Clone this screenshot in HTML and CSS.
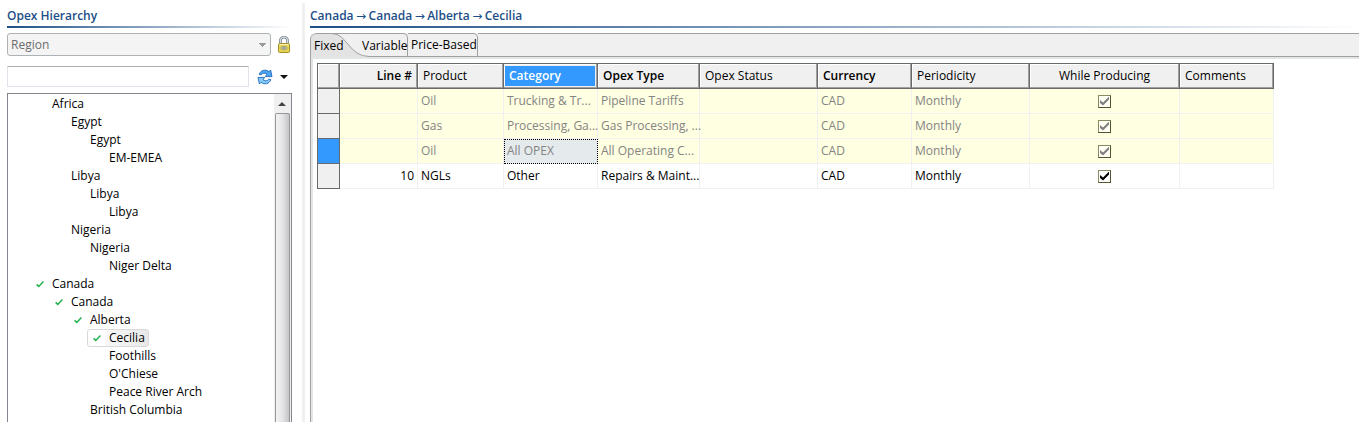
FILE: index.html
```html
<!DOCTYPE html>
<html lang="en">
<head>
<meta charset="utf-8">
<title>Opex Hierarchy</title>
<link rel="stylesheet" href="styles.css">
</head>
<body>
<svg width="0" height="0" class="defs" aria-hidden="true">
  <defs>
    <symbol id="tick" viewBox="0 0 8 8"><path d="M.6 4.4 2.8 6.4 7.4 1.6" fill="none" stroke="#22b14c" stroke-width="1.5"/></symbol>
  </defs>
</svg>
<div class="app">
  <aside class="side">
    <h2 class="title">Opex Hierarchy</h2>
    <div class="picker">
      <select class="level" aria-label="Hierarchy level" disabled><option>Region</option></select>
      <svg class="lock" viewBox="0 0 14 17" role="img" aria-label="Locked">
        <path d="M3.4 8V4.8a3.6 3.6 0 0 1 7.2 0V8" fill="none" stroke="#7d8a93" stroke-width="2.8"/>
        <path d="M3.4 8V4.8a3.6 3.6 0 0 1 7.2 0V8" fill="none" stroke="#d3dbe0" stroke-width="1.2"/>
        <rect x="1.5" y="7.5" width="11" height="9" rx="1" fill="#e6d456" stroke="#a08f2c"/>
        <path d="M2.5 8.5h9" stroke="#faf4b4"/>
        <ellipse cx="7" cy="12" rx="3.2" ry="1.8" fill="#c6cccf" stroke="#a49b4c" stroke-width=".8"/>
        <path d="M5.4 12h3.2" stroke="#6b757c"/>
      </svg>
    </div>
    <div class="search">
      <input class="filter" type="text" aria-label="Filter">
      <button class="refresh" aria-label="Refresh">
        <svg width="16" height="16" viewBox="0 0 16 16">
          <path d="M2.2 5.4C3.6 1 8.6 0 12 2.6L13.6 1 15 7.6H8.4L10 5.2C7.8 3.6 5.4 4 4.2 5.8Z" fill="#4fa6ef" stroke="#1f66bd" stroke-width=".9"/>
          <path d="M13.8 10.6C12.4 15 7.4 16 4 13.4L2.4 15 1 8.4H7.6L6 10.8C8.2 12.4 10.6 12 11.8 10.2Z" fill="#86cbf8" stroke="#1f66bd" stroke-width=".9"/>
        </svg>
      </button>
      <button class="more" aria-label="More"><svg width="8" height="4" viewBox="0 0 8 4"><path d="M0 0h8L4 4z" fill="#111"/></svg></button>
    </div>
    <div class="treebox">
      <ul class="tree">
        <li class="l1"><span class="node">Africa</span></li>
        <li class="l2"><span class="node">Egypt</span></li>
        <li class="l3"><span class="node">Egypt</span></li>
        <li class="l4"><span class="node">EM-EMEA</span></li>
        <li class="l2"><span class="node">Libya</span></li>
        <li class="l3"><span class="node">Libya</span></li>
        <li class="l4"><span class="node">Libya</span></li>
        <li class="l2"><span class="node">Nigeria</span></li>
        <li class="l3"><span class="node">Nigeria</span></li>
        <li class="l4"><span class="node">Niger Delta</span></li>
        <li class="l1"><span class="node"><svg class="tick"><use href="#tick"/></svg>Canada</span></li>
        <li class="l2"><span class="node"><svg class="tick"><use href="#tick"/></svg>Canada</span></li>
        <li class="l3"><span class="node"><svg class="tick"><use href="#tick"/></svg>Alberta</span></li>
        <li class="l4"><span class="node selected"><svg class="tick"><use href="#tick"/></svg>Cecilia</span></li>
        <li class="l4"><span class="node">Foothills</span></li>
        <li class="l4"><span class="node">O'Chiese</span></li>
        <li class="l4"><span class="node">Peace River Arch</span></li>
        <li class="l3"><span class="node">British Columbia</span></li>
      </ul>
      <div class="scroll">
        <svg class="up" width="8" height="4" viewBox="0 0 8 4"><path d="M0 4h8L4 0z" fill="#444"/></svg>
        <div class="thumb"></div>
      </div>
    </div>
  </aside>
  <div class="split"></div>
  <main class="main">
    <h2 class="title crumbs"><span>Canada</span><span class="arrow">→</span><span>Canada</span><span class="arrow">→</span><span>Alberta</span><span class="arrow">→</span><span>Cecilia</span></h2>
    <div class="folder">
      <div class="tabs" role="tablist">
        <button class="tab tab-active" role="tab" aria-selected="true">Fixed</button>
        <svg class="curve" width="37" height="24" viewBox="0 0 37 24"><path d="M0 0C15 0 17 23.5 37 23.5V24H0z" fill="#e3e3e3"/><path d="M0 .5C15 .5 17 23.5 37 23.5" fill="none" stroke="#a0a0a0"/><path d="M0 .5H37" stroke="#a0a0a0"/></svg>
        <button class="tab tab-first" role="tab">Variable</button>
        <button class="tab tab-next" role="tab">Price-Based</button>
        <div class="tabfill"></div>
      </div>
      <div class="page">
        <table class="grid">
          <colgroup><col class="c-mark"><col class="c-line"><col class="c-prod"><col class="c-cat"><col class="c-type"><col class="c-stat"><col class="c-cur"><col class="c-per"><col class="c-while"><col class="c-com"></colgroup>
          <thead>
            <tr><th></th><th class="req num">Line #</th><th>Product</th><th class="req current"><span>Category</span></th><th class="req">Opex Type</th><th>Opex Status</th><th class="req">Currency</th><th>Periodicity</th><th class="mid">While Producing</th><th>Comments</th></tr>
          </thead>
          <tbody>
            <tr class="locked"><td class="mark"></td><td></td><td>Oil</td><td>Trucking &amp; Tr...</td><td>Pipeline Tariffs</td><td></td><td>CAD</td><td>Monthly</td><td class="mid"><input type="checkbox" aria-label="While producing" checked disabled></td><td></td></tr>
            <tr class="locked"><td class="mark"></td><td></td><td>Gas</td><td>Processing, Ga...</td><td>Gas Processing, ...</td><td></td><td>CAD</td><td>Monthly</td><td class="mid"><input type="checkbox" aria-label="While producing" checked disabled></td><td></td></tr>
            <tr class="locked"><td class="mark on"></td><td></td><td>Oil</td><td class="focus">All OPEX</td><td>All Operating C...</td><td></td><td>CAD</td><td>Monthly</td><td class="mid"><input type="checkbox" aria-label="While producing" checked disabled></td><td></td></tr>
            <tr><td class="mark"></td><td class="num">10</td><td>NGLs</td><td>Other</td><td>Repairs &amp; Maint...</td><td></td><td>CAD</td><td>Monthly</td><td class="mid"><input type="checkbox" aria-label="While producing" checked></td><td></td></tr>
          </tbody>
        </table>
      </div>
    </div>
  </main>
</div>
</body>
</html>
```
FILE: styles.css
```css
* { box-sizing: border-box; }
body { margin: 0; background: #fff; color: #000; font: 12px/18px "Open Sans", "Noto Sans", sans-serif; }
button, input, select { font: inherit; color: inherit; margin: 0; }
.defs { display: none; }
.app { display: flex; height: 100vh; overflow: hidden; }

.side { flex: none; width: 292px; padding: 7px 0 0 7px; display: flex; flex-direction: column; }
.split { flex: none; width: 3px; margin: 3px 5px 0 10px; background: #f0f0f0; }
.main { flex: 1; min-width: 0; padding-top: 7px; display: flex; flex-direction: column; }

.title { margin: 0; height: 21px; font-size: 12px; line-height: 18px; font-weight: 600; color: #1c4e87; white-space: nowrap; border-bottom: 2px solid; border-image: linear-gradient(90deg, #1c4e87, #fff) 1; }
.crumbs { display: flex; gap: 2px; }
.arrow { width: 11px; font-family: "DejaVu Sans", sans-serif; font-weight: 400; text-align: center; }

.picker { display: flex; align-items: center; gap: 6px; margin-top: 5px; }
.level { appearance: none; width: 264px; height: 23px; padding: 0 3px; border: 1px solid #adb2b5; border-radius: 3px; color: #6d6d6d; opacity: 1;
  background: conic-gradient(from -45deg at 50% 100%, #999 90deg, transparent 0) 250px 9px / 8px 4px no-repeat, #f4f4f4; }
.lock { width: 14px; height: 17px; }
.search { display: flex; align-items: center; margin-top: 10px; }
.filter { width: 242px; height: 21px; padding: 0 4px; border: 1px solid #e2e3ea; border-top-color: #abadb3; border-radius: 1px; background: #fff; }
.refresh, .more { display: flex; padding: 0; border: 0; background: none; }
.refresh { margin-left: 8px; }
.more { margin-left: 7px; }

.treebox { flex: 1; min-height: 0; display: flex; width: 285px; margin-top: 6px; border: 1px solid #828790; border-bottom: 0; overflow: hidden; }
.tree { flex: 1; margin: 0; padding: 1px 0 0; list-style: none; }
.tree li { height: 18px; white-space: nowrap; }
.l1 { padding-left: 22px; }
.l2 { padding-left: 41px; }
.l3 { padding-left: 60px; }
.l4 { padding-left: 79px; }
.node { display: inline-flex; align-items: center; height: 18px; padding-left: 22px; }
.node:has(.tick) { padding-left: 6px; gap: 8px; }
.tree .node.selected { padding: 0 3px 0 5px; border: 1px solid #d9d9d9; border-radius: 3px; background: linear-gradient(90deg, #fff 17px, #f8f8f8 17px, #e8e8e8); }
.tick { width: 8px; height: 8px; }
.scroll { width: 17px; padding: 1px 1px 0 0; display: flex; flex-direction: column; align-items: center; background: #f0f0f0; }
.up { flex: none; margin: 7px 0; }
.thumb { flex: 1; width: 15px; border: 1px solid #979797; border-bottom: 0; border-radius: 2px 2px 0 0; background: linear-gradient(90deg, #f4f4f4, #e4e4e6 50%, #c4c4c8); }

.folder { flex: 1; margin-top: 5px; display: flex; flex-direction: column; border-left: 1px solid #a0a0a0; border-top-left-radius: 6px; }
.tabs { display: flex; height: 24px; background: #f0f0f0; border-radius: 5px 0 0 0; }
.tab { padding: 0; border: 0; border-top: 1px solid #a0a0a0; background: none; white-space: nowrap; text-align: left; }
.tab-active { width: 21px; padding-left: 3px; background: #e3e3e3; border-top-left-radius: 6px; position: relative; z-index: 1; }
.curve { flex: none; margin-right: -8px; }
.tab-first, .tab-next { border-right: 1px solid #a0a0a0; border-bottom: 1px solid #a0a0a0; border-top-right-radius: 5px; }
.tab-first { width: 47px; padding-left: 1px; border-bottom: 0; background: linear-gradient(#a0a0a0, #a0a0a0) 8px 100% / 100% 1px no-repeat; }
.tab-next { width: 70px; padding-left: 3px; }
.tabfill { flex: 1; border-top: 1px solid #a0a0a0; border-bottom: 1px solid #a0a0a0; }
.page { flex: 1; padding: 4px; border: 2px solid #e3e6e6; border-width: 2px 0 0 2px; }

.grid { table-layout: fixed; width: 957px; border-collapse: separate; border-spacing: 0; border-left: 1px solid #696969; border-top: 1px solid #696969; }
.c-mark { width: 22px; } .c-line { width: 78px; } .c-prod { width: 86px; } .c-cat, .c-cur, .c-com { width: 94px; }
.c-type { width: 102px; } .c-stat, .c-per { width: 118px; } .c-while { width: 150px; }
.grid th, .grid td { height: 25px; padding: 0 0 0 3px; text-align: left; vertical-align: middle; white-space: nowrap; border: 0 solid #f0f0f0; border-width: 0 1px 1px 0; }
.grid th { padding: 0 5px; font-weight: 400; background: #f0f0f0; border-color: #696969; box-shadow: inset -1px -1px #a0a0a0, inset 1px 1px #fff; }
.grid .req { font-weight: 600; }
.grid .num { text-align: right; padding-right: 3px; }
.grid th.num { padding-right: 5px; }
.grid .mid { text-align: center; padding: 0; }
.grid th.current { padding: 2px 2px 2px 1px; }
.current span { display: block; height: 20px; line-height: 20px; padding-left: 4px; color: #fff; background: #3399ff; }
.locked td { color: #848484; background: #ffffe1; }
.grid td.mark { background: #f0f0f0; border-color: #696969; }
.grid td.on { background: #3399ff; }
.grid td.focus { background: #e5eaec; outline: 1px dotted #000; outline-offset: -1px; }
.grid input { appearance: none; display: block; width: 13px; height: 13px; margin: 0 auto; border: 1px solid; border-color: #8a8a62 #54542f #54542f #8a8a62; background: #fff; }
.grid input:checked::before { content: ""; display: block; width: 9px; height: 9px; margin: 1px; background: #000; clip-path: polygon(0 40%, 34% 68%, 100% 0, 100% 34%, 34% 100%, 0 72%); }
.grid input:disabled { background: #fffff4; }
.grid input:disabled::before { background: #808080; }
```
